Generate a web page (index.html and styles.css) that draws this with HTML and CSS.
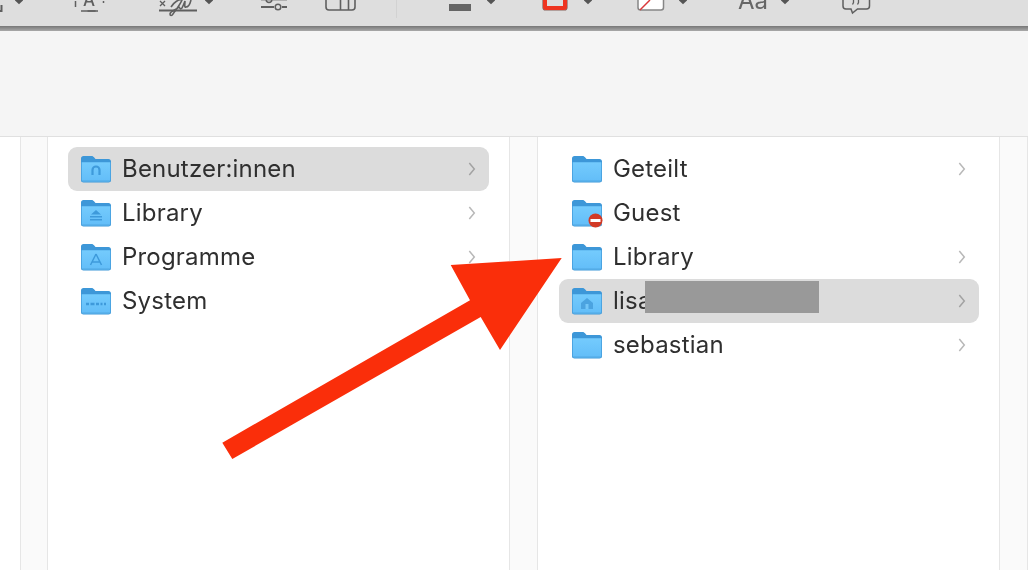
FILE: index.html
```html
<!DOCTYPE html>
<html lang="de">
<head>
<meta charset="utf-8">
<title>Finder</title>
<link rel="stylesheet" href="styles.css">
</head>
<body>
<svg class="defs" width="0" height="0" aria-hidden="true">
  <defs>
    <linearGradient id="fbody" x1="0" y1="0" x2="0" y2="1">
      <stop offset="0" stop-color="#74cbfd"/>
      <stop offset="1" stop-color="#62bdf8"/>
    </linearGradient>
    <symbol id="folder" viewBox="0 0 32 30">
      <path d="M1 4.5C1 3 2 2 3.5 2h8c1 0 1.600.4 2.300 1.100L15.500 5H28.500C30 5 31 6 31 7.500V26c0 1.500-1 2.500-2.500 2.500h-25C2 28.500 1 27.500 1 26Z" fill="#3d97d8"/>
      <path d="M1.700 8.300h28.600V26c0 1-.8 1.800-1.800 1.800h-25c-1 0-1.800-.8-1.800-1.800Z" fill="url(#fbody)"/>
      <path d="M1 27h30" stroke="#4b9ed8" stroke-width="1" opacity=".7"/>
    </symbol>
    <symbol id="chev" viewBox="0 0 8 14">
      <path d="M1.300 1 6.300 7 1.300 13" fill="none" stroke="currentColor" stroke-width="1.500"/>
    </symbol>
  </defs>
</svg>

<div class="app">
  <header class="toolbar">
    <svg class="toolbar-icons" width="1028" height="26" viewBox="0 0 1028 26" aria-hidden="true">
      <g fill="none" stroke="#5f5f5f" stroke-width="1.500">
        <path d="M0 11h1.500V5" stroke-width="2"/>
        <path d="M75.500 1v7.500q0 2.500 2.500 2.500h23q2.500 0 2.500-2.500V1" stroke-dasharray="6 15 8 15 30"/>
        <path d="M81 11h17" />
        <path d="M159 10.500h38" stroke-width="1.800"/>
        <path d="M160 1l5 5m0-5-5 5" stroke-width="1.300"/>
        <path d="M171 7c3-5 8-8 11-7-2 5-7 11-9 14-1 2-3 2-3 0 0-3 6-4 9-7 1 1 1 3 3 1 1-2 2-4 3-7 0 3-1 7 1 6 2 0 4-3 5-7" stroke-width="1.600"/>
        <path d="M261 7h13M282 7h5" stroke-width="1.800"/>
        <circle cx="278" cy="7" r="2.800" stroke-width="1.500"/>
        <path d="M261-.4h26"/>
        <circle cx="269" cy="-.4" r="2.800"/>
        <path d="M326-2v9q0 3 3 3h23q3 0 3-3v-9M340.500-2v12M348.500-2v12" stroke-width="1.600"/>
        <path d="M396.500 0v18" stroke="#d2d2d2" stroke-width="1"/>
      </g>
      <text class="tb-a" x="89" y="6">A</text>
      <rect x="449" y="4" width="22" height="7" fill="#656565"/>
      <rect x="543" y="-6" width="24" height="16" rx="2.500" fill="none" stroke="#86605a" stroke-width="1.200"/>
      <rect x="545" y="-4" width="20" height="12" rx="1" fill="none" stroke="#ee3420" stroke-width="4"/>
      <rect x="638" y="-6" width="25.500" height="16" rx="2.500" fill="#fff" stroke="#868686" stroke-width="1.500"/>
      <path d="M640 10 650 0" stroke="#d9383a" stroke-width="1.500"/>
      <text class="tb-aa" x="738" y="9">Aa</text>
      <path d="M843-3v9q0 3 3 3h5l1.500 4 5-4h9q3 0 3-3v-9" fill="none" stroke="#5f5f5f" stroke-width="1.500"/>
      <path d="M853.500 0v2.500l-1 2M858.500 0v2.500l-1 2" fill="none" stroke="#5f5f5f" stroke-width="1.300"/>
      <g fill="#555">
        <path d="M15-1h8v1.500L19 4.200 15 .5Z"/>
        <path d="M205-1h8v1.500L209 4.200 205 .5Z"/>
        <path d="M487-1h8v1.500L491 4.200 487 .5Z"/>
        <path d="M584-1h8v1.500L588 4.200 584 .5Z"/>
        <path d="M679-1h8v1.500L683 4.200 679 .5Z"/>
        <path d="M781-1h8v1.500L785 4.200 781 .5Z"/>
      </g>
    </svg>
  </header>
  <div class="shadow"></div>
  <div class="banner"></div>

  <main class="columns">
    <div class="edge"></div>
    <div class="strip"></div>

    <section class="col col-a">
      <div class="row selected">
        <span class="ficon"><svg width="32" height="30"><use href="#folder"/></svg>
          <svg class="badge" width="32" height="30" viewBox="0 0 32 30"><path d="M12.500 21v-5a3.500 3.500 0 0 1 7 0v5" fill="none" stroke="#3e9adb" stroke-width="2.200"/></svg></span>
        <span class="name">Benutzer:innen</span>
        <svg class="chev" width="8" height="14"><use href="#chev"/></svg>
      </div>
      <div class="row">
        <span class="ficon"><svg width="32" height="30"><use href="#folder"/></svg>
          <svg class="badge" width="32" height="30" viewBox="0 0 32 30"><path d="M16 12l5 4.500H11ZM10 18h12v1.500H10ZM10 21h12v1.500H10Z" fill="#3e9adb"/></svg></span>
        <span class="name">Library</span>
        <svg class="chev" width="8" height="14"><use href="#chev"/></svg>
      </div>
      <div class="row">
        <span class="ficon"><svg width="32" height="30"><use href="#folder"/></svg>
          <svg class="badge" width="32" height="30" viewBox="0 0 32 30"><path d="M16 12 10.500 23M16 12l5.500 11M11.500 20h9" fill="none" stroke="#3e9adb" stroke-width="1.500"/></svg></span>
        <span class="name">Programme</span>
        <svg class="chev" width="8" height="14"><use href="#chev"/></svg>
      </div>
      <div class="row">
        <span class="ficon"><svg width="32" height="30"><use href="#folder"/></svg>
          <svg class="badge" width="32" height="30" viewBox="0 0 32 30"><path d="M6 18h3M10.500 18h4M16 18h3M20.500 18h2M24 18h2" stroke="#3e9adb" stroke-width="2.500" fill="none"/></svg></span>
        <span class="name">System</span>
      </div>
    </section>

    <div class="strip"></div>

    <section class="col col-b">
      <div class="row">
        <span class="ficon"><svg width="32" height="30"><use href="#folder"/></svg></span>
        <span class="name">Geteilt</span>
        <svg class="chev" width="8" height="14"><use href="#chev"/></svg>
      </div>
      <div class="row">
        <span class="ficon"><svg width="32" height="30"><use href="#folder"/></svg>
          <svg class="badge" width="32" height="30" viewBox="0 0 32 30"><circle cx="24.500" cy="22.500" r="7" fill="#d23a26"/><rect x="19.500" y="21" width="10" height="3" fill="#fff"/></svg></span>
        <span class="name">Guest</span>
      </div>
      <div class="row">
        <span class="ficon"><svg width="32" height="30"><use href="#folder"/></svg></span>
        <span class="name">Library</span>
        <svg class="chev" width="8" height="14"><use href="#chev"/></svg>
      </div>
      <div class="row selected">
        <span class="ficon"><svg width="32" height="30"><use href="#folder"/></svg>
          <svg class="badge" width="32" height="30" viewBox="0 0 32 30"><path d="M16 12l6 5v6H10v-6Z" fill="#4ba3e0"/><rect x="14.500" y="18" width="3" height="5" fill="#74c6f8"/></svg></span>
        <span class="name">lisa</span>
        <svg class="chev" width="8" height="14"><use href="#chev"/></svg>
        <span class="redact"></span>
      </div>
      <div class="row">
        <span class="ficon"><svg width="32" height="30"><use href="#folder"/></svg></span>
        <span class="name">sebastian</span>
        <svg class="chev" width="8" height="14"><use href="#chev"/></svg>
      </div>
    </section>

    <div class="strip strip-end"></div>

    <svg class="arrow" width="1028" height="434" viewBox="0 136 1028 434" aria-hidden="true">
      <path d="M222.300 441.700 470 299.300 450.700 264 561.700 257 500 349 480.700 316 232.300 458Z" fill="#fa2e0a"/>
    </svg>
  </main>
</div>
</body>
</html>
```

FILE: styles.css
```css
* { box-sizing: border-box; }

html, body {
  margin: 0;
  padding: 0;
  background: #fff;
}

.defs { position: absolute; }

.app {
  width: 1028px;
  height: 570px;
  display: flex;
  flex-direction: column;
  overflow: hidden;
  font-family: Inter, "Liberation Sans", sans-serif;
}

.toolbar {
  height: 26px;
  flex: none;
  background: #dedede;
}

.toolbar-icons {
  display: block;
  overflow: hidden;
  filter: blur(0.3px);
}

.tb-a {
  font: 500 17px Inter, sans-serif;
  fill: #5f5f5f;
  text-anchor: middle;
}

.tb-aa {
  font: 400 24px Inter, sans-serif;
  fill: #666;
}

.shadow {
  height: 5px;
  flex: none;
  background: linear-gradient(#777, #a9a9a9);
}

.banner {
  height: 106px;
  flex: none;
  background: #f5f5f5;
  border-bottom: 1px solid #e0e0e0;
}

.columns {
  position: relative;
  flex: 1;
  display: grid;
  grid-template-columns: 20px 28px 461px 29px 461px 29px;
  min-height: 0;
}

.edge { background: #fff; }

.strip {
  background: #fafafa;
  border-left: 1px solid #e6e6e6;
  border-right: 1px solid #e6e6e6;
}

.strip:first-of-type { margin-left: -1px; }

.col {
  display: flex;
  flex-direction: column;
  padding: 10px 20px 0;
  background: #fff;
}

.col-b { padding-left: 21px; }

.row {
  position: relative;
  height: 44px;
  flex: none;
  display: flex;
  align-items: center;
  padding: 0 13px 0 12px;
  border-radius: 9px;
  color: #2f2f2f;
}

.row.selected { background: #dcdcdc; }

.ficon {
  position: relative;
  width: 32px;
  height: 30px;
  flex: none;
  filter: blur(0.4px);
}

.ficon svg { display: block; }

.ficon .badge {
  position: absolute;
  left: 0;
  top: 0;
}

.name {
  margin-left: 10px;
  flex: 1;
  font-size: 24px;
  letter-spacing: 0.2px;
  line-height: 44px;
  filter: blur(0.3px);
}

.chev {
  flex: none;
  color: #b8b8b8;
  filter: blur(0.3px);
}

.selected .chev { color: #a2a2a2; }

.redact {
  position: absolute;
  left: 86px;
  top: 2px;
  width: 174px;
  height: 32px;
  background: #999;
}

.arrow {
  position: absolute;
  left: 0;
  top: 0;
  pointer-events: none;
}
```
